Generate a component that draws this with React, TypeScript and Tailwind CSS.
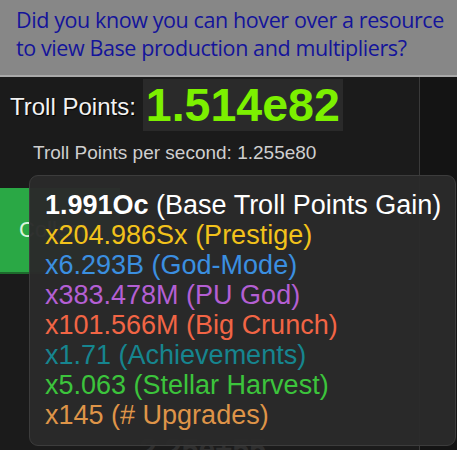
import React from "react";

const rows = [
  { value: "x204.986Sx", label: "(Prestige)", color: "text-[#f2c21b]" },
  { value: "x6.293B", label: "(God-Mode)", color: "text-[#3b8fe0]" },
  { value: "x383.478M", label: "(PU God)", color: "text-[#b45fd3]" },
  { value: "x101.566M", label: "(Big Crunch)", color: "text-[#f26545]" },
  { value: "x1.71", label: "(Achievements)", color: "text-[#16858f]" },
  { value: "x5.063", label: "(Stellar Harvest)", color: "text-[#3cc43c]" },
  { value: "x145", label: "(# Upgrades)", color: "text-[#de9448]" },
];

export default function App() {
  return (
    <div className="relative h-[450px] w-[457px] overflow-hidden bg-[#1b1b1b] font-['Liberation_Sans',Arial,sans-serif]">
      {/* bandeau astuce */}
      <div className="h-[77px] whitespace-nowrap border-b-2 border-[#a9a9a9] bg-[#878787] px-4 pt-[6px] font-['Open_Sans',sans-serif] text-[21.5px] leading-[28px] tracking-[-0.4px] text-[#14149a]">
        Did you know you can hover over a resource
        <br />
        to view Base production and multipliers?
      </div>

      <div className="flex h-[373px]">
        <div className="w-[420px] border-r border-[#3a3a3a]">
          <div className="flex items-end pl-[10px] pt-[2px]">
            <span className="mb-[6px] text-[24px] font-medium text-[#f2f2f2] [text-shadow:1px_1px_1px_#000]">Troll Points:</span>
            <span className="ml-[7px] h-[52px] bg-[#2a2a2a] px-[3px] text-[46.5px] font-bold leading-[52px] text-[#7cf000]">1.514e82</span>
          </div>
          <div className="mt-[8px] pl-[33px] text-[19px] text-[#cfcfcf]">Troll Points per second: 1.255e80</div>
          <div className="mt-[20px] flex h-[86px] w-[120px] items-center border-b-2 border-[#1d6b2c] bg-[#2aa845] pl-[19px] text-[22px] text-[#d8f5dc]">
            Collect
          </div>
        </div>
        <div className="flex-1 bg-[#141414]" />
      </div>

      <div className="absolute left-[140px] top-[434px] text-[30px] font-bold leading-[30px] text-[#2f2f2f]">2.25e+55</div>

      {/* infobulle */}
      <div className="absolute left-[29px] top-[175px] h-[271px] w-[427px] whitespace-nowrap rounded-[9px] border border-[#3c3c3c] bg-[#2a2a2a]/[0.97] pl-[15px] pr-[6px] pt-[14px] text-[27px] leading-[30px]">
        <div className="text-white">
          <span className="font-bold">1.991Oc</span> (Base Troll Points Gain)
        </div>
        {rows.map((r) => (
          <div key={r.label} className={r.color}>
            {r.value} {r.label}
          </div>
        ))}
      </div>
    </div>
  );
}
